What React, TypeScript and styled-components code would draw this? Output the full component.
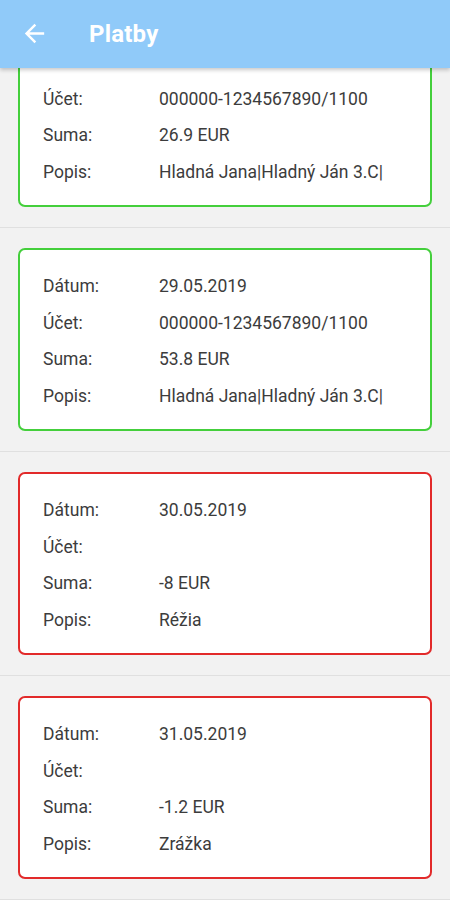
import styled, { createGlobalStyle } from "styled-components";

interface Payment {
    datum?: string;
    ucet: string;
    suma: string;
    popis: string;
    ok: boolean;
}

const payments: Payment[] = [
    {
        datum: "28.05.2019",
        ucet: "000000-1234567890/1100",
        suma: "26.9 EUR",
        popis: "Hladná Jana|Hladný Ján 3.C|",
        ok: true,
    },
    {
        datum: "29.05.2019",
        ucet: "000000-1234567890/1100",
        suma: "53.8 EUR",
        popis: "Hladná Jana|Hladný Ján 3.C|",
        ok: true,
    },
    { datum: "30.05.2019", ucet: "", suma: "-8 EUR", popis: "Réžia", ok: false },
    { datum: "31.05.2019", ucet: "", suma: "-1.2 EUR", popis: "Zrážka", ok: false },
];

const GlobalStyle = createGlobalStyle`
    html, body {
        margin: 0;
        padding: 0;
        background: #f2f2f2;
        font-family: Roboto, "Liberation Sans", sans-serif;
    }
`;

const Screen = styled.div`
    position: relative;
    width: 450px;
    height: 900px;
    overflow: hidden;
    background: #f2f2f2;
`;

const AppBar = styled.header`
    position: absolute;
    top: 0;
    left: 0;
    right: 0;
    height: 68px;
    z-index: 2;
    display: flex;
    align-items: center;
    background: #90caf9;
    box-shadow: 0 2px 4px rgba(0, 0, 0, 0.22);
    .back {
        margin-left: 20px;
        margin-top: -1px;
    }
    h1 {
        margin: 0 0 0 40px;
        color: #ffffff;
        font-size: 24px;
        font-weight: 700;
        letter-spacing: 0.2px;
    }
`;

const List = styled.ul`
    margin: 0;
    padding: 4px 0 0 0;
    list-style: none;
`;

const Item = styled.li`
    padding: 20px 18px;
    border-bottom: 1px solid #e0e0e0;
`;

const Card = styled.div<{ $ok: boolean }>`
    height: 183px;
    box-sizing: border-box;
    background: #ffffff;
    border: 2px solid ${(p) => (p.$ok ? "#44cf3c" : "#e22a2a")};
    border-radius: 7px;
    padding: 18px 23px 0;
`;

const Row = styled.div`
    display: grid;
    grid-template-columns: 116px 1fr;
    height: 36.5px;
    align-items: center;
    font-size: 17.5px;
    color: #3c3c3c;
    white-space: nowrap;
`;

const BackArrow = () => (
    <svg className="back" width="29" height="29" viewBox="0 0 24 24" fill="#ffffff">
        <path d="M20 11H7.83l5.59-5.59L12 4l-8 8 8 8 1.41-1.41L7.83 13H20v-2z" />
    </svg>
);

export default function App() {
    return (
        <Screen>
            <GlobalStyle />
            <AppBar>
                <BackArrow />
                <h1>Platby</h1>
            </AppBar>
            <List>
                {payments.map((p, i) => (
                    <Item key={i}>
                        <Card $ok={p.ok}>
                            <Row>
                                <span>Dátum:</span>
                                <span>{p.datum}</span>
                            </Row>
                            <Row>
                                <span>Účet:</span>
                                <span>{p.ucet}</span>
                            </Row>
                            <Row>
                                <span>Suma:</span>
                                <span>{p.suma}</span>
                            </Row>
                            <Row>
                                <span>Popis:</span>
                                <span>{p.popis}</span>
                            </Row>
                        </Card>
                    </Item>
                ))}
            </List>
        </Screen>
    );
}
